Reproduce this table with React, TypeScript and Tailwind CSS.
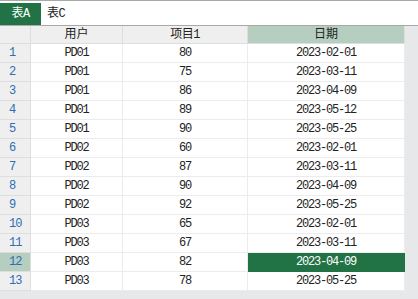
import React from 'react';

const rows = [
  ['PD01', '80', '2023-02-01'],
  ['PD01', '75', '2023-03-11'],
  ['PD01', '86', '2023-04-09'],
  ['PD01', '89', '2023-05-12'],
  ['PD01', '90', '2023-05-25'],
  ['PD02', '60', '2023-02-01'],
  ['PD02', '87', '2023-03-11'],
  ['PD02', '90', '2023-04-09'],
  ['PD02', '92', '2023-05-25'],
  ['PD03', '65', '2023-02-01'],
  ['PD03', '67', '2023-03-11'],
  ['PD03', '82', '2023-04-09'],
  ['PD03', '78', '2023-05-25'],
];

const font = { fontFamily: '"Liberation Mono", "Noto Sans CJK SC", monospace' };

const App = () => {
  const selRow = 11;

  return (
    <div className="w-[418px] h-[299px] bg-[#e7e8ea] overflow-hidden text-[12px] text-[#222]" style={font}>
      {/* Sheet tabs */}
      <div className="h-[26px] bg-white border-t border-b border-[#a9a9a9] flex items-end">
        <div className="h-[22px] w-[41px] bg-[#217346] text-white flex items-center justify-center tracking-[-0.5px]">
          表A
        </div>
        <div className="h-[22px] px-[6px] flex items-center tracking-[-0.5px]">表C</div>
      </div>

      {/* Grid */}
      <div className="grid grid-cols-[31px_92px_125px_157px] w-[405px]">
        <div className="h-[18px] bg-[#efefef] border-r border-b border-[#dedede]" />
        <div className="h-[18px] bg-[#efefef] border-r border-b border-[#dedede] flex items-center justify-center">用户</div>
        <div className="h-[18px] bg-[#efefef] border-r border-b border-[#dedede] flex items-center justify-center tracking-[-0.5px]">项目1</div>
        <div className="h-[18px] bg-[#b5cebf] border-r border-b border-[#dedede] flex items-center justify-center">日期</div>

        {rows.map((r, i) => (
          <React.Fragment key={i}>
            <div
              className={`h-[19px] border-r border-b border-[#dedede] flex items-center pl-[9px] text-[#2e6db4] tracking-[-1px] ${
                i === selRow ? 'bg-[#b5cebf]' : 'bg-[#efefef]'
              }`}
            >
              {i + 1}
            </div>
            <div className="h-[19px] bg-white border-r border-b border-[#ececec] flex items-center justify-center tracking-[-1.2px]">
              {r[0]}
            </div>
            <div className="h-[19px] bg-white border-r border-b border-[#ececec] flex items-center justify-center tracking-[-1.2px]">
              {r[1]}
            </div>
            <div
              className={`h-[19px] border-r border-b flex items-center justify-center tracking-[-1.2px] ${
                i === selRow ? 'bg-[#217346] text-white border-[#217346]' : 'bg-white border-[#ececec]'
              }`}
            >
              {r[2]}
            </div>
          </React.Fragment>
        ))}
      </div>
    </div>
  );
};

export default App;
